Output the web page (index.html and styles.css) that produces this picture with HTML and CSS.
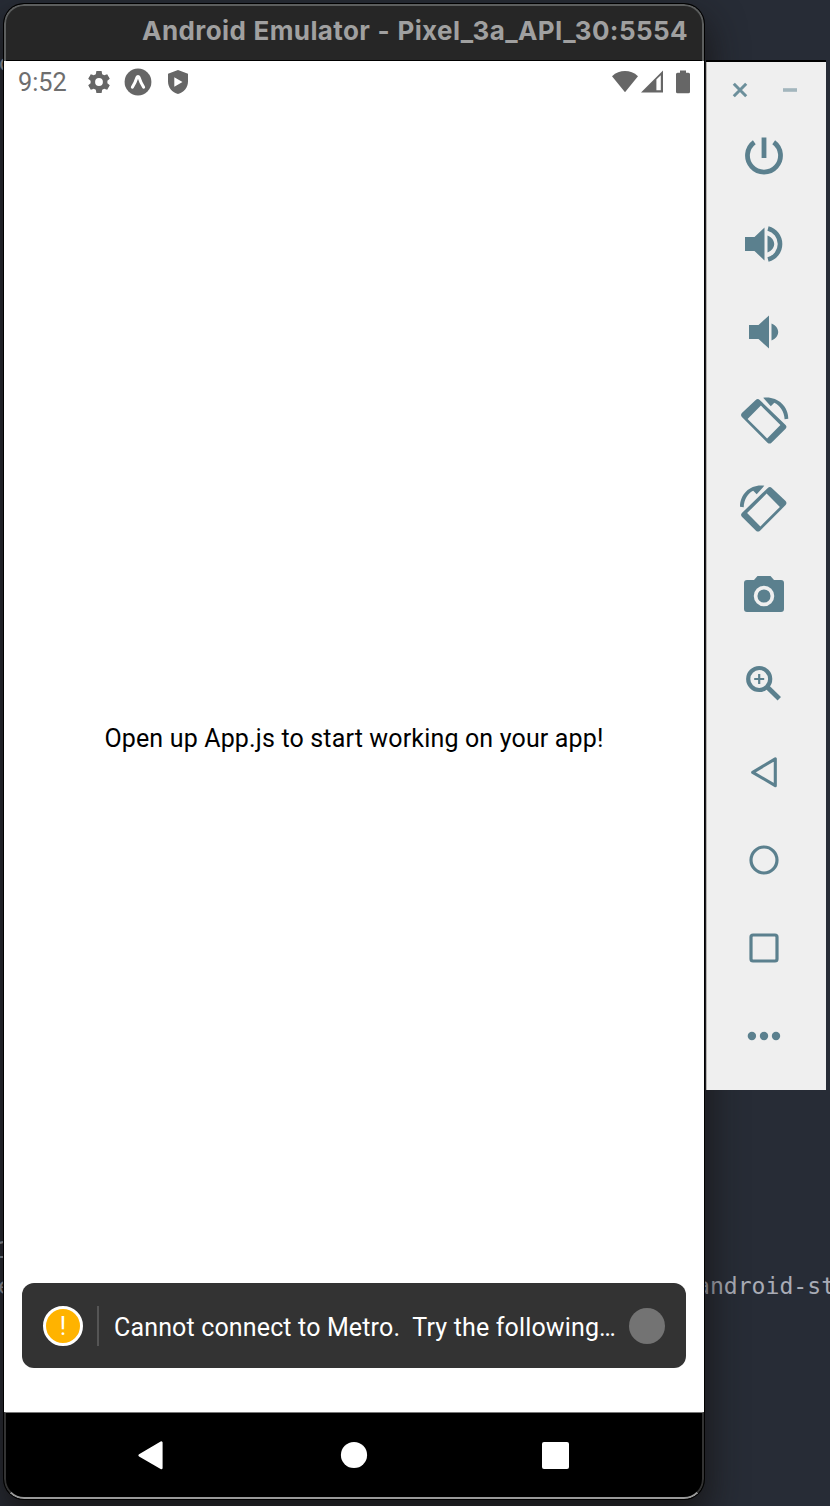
FILE: index.html
```html
<!DOCTYPE html>
<html lang="en">
<head>
<meta charset="utf-8">
<title>Android Emulator</title>
<link rel="stylesheet" href="styles.css">
</head>
<body>
<main class="desktop">
  <span class="code code-a">c</span>
  <span class="code code-b">1</span>
  <span class="code code-c">e</span>
  <span class="code code-d">android-st</span>

  <section class="emulator">
    <header class="titlebar"><span class="title">Android Emulator - Pixel_3a_API_30:5554</span></header>
    <div class="screen">
      <div class="status">
        <span class="time">9:52</span>
        <svg class="gear" width="24" height="24" viewBox="0 0 24 24"><path fill-rule="evenodd" d="M9.4 1h5.2l.6 3.2 2 1.1 3-1.1 2.6 4.5-2.4 2.1v2.4l2.4 2.1-2.6 4.5-3-1.1-2 1.1-.6 3.2H9.4l-.6-3.2-2-1.1-3 1.1-2.6-4.5 2.4-2.1v-2.4L1.200 8.700l2.600-4.500 3 1.100 2-1.100zM12 8.100a3.900 3.900 0 1 0 0 7.800 3.900 3.900 0 0 0 0-7.800z"/></svg>
        <svg class="expo" width="28" height="28" viewBox="0 0 28 28"><circle cx="14" cy="14" r="13.400"/><path class="caret" d="M8.400 19.200C10.700 15.800 12 12.500 13 9.300c.4-1 1.600-1 2 0 1 3.200 2.300 6.500 4.600 9.900"/></svg>
        <svg class="shield" width="22" height="26" viewBox="0 0 22 26"><path fill-rule="evenodd" d="M11 1 21 4.800v7.700c0 6-4.200 11-10 12.500C5.200 23.500 1 18.500 1 12.500V4.800zM7.300 8.300v9.400l8.200-4.700z"/></svg>
        <span class="spacer"></span>
        <svg class="wifi" width="28" height="24" viewBox="0 0 28 24"><path d="M1 6.200C8.500-.6 19.500-.6 27 6.200L14 22.200z"/></svg>
        <svg class="signal" width="24" height="24" viewBox="0 0 24 24"><path fill-rule="evenodd" d="M1 22.500 23 .5v22zM16.400 9.500v10.800h4.400V5.200z"/></svg>
        <svg class="battery" width="14" height="24" viewBox="0 0 14 24"><path d="M4 .5h6v2.300h2.500A1.500 1.500 0 0 1 14 4.300v17.500a1.500 1.500 0 0 1-1.500 1.500h-11A1.500 1.500 0 0 1 0 21.800V4.300a1.500 1.500 0 0 1 1.500-1.500H4z"/></svg>
      </div>
      <div class="app"><p class="hello">Open up App.js to start working on your app!</p></div>
      <div class="toast">
        <span class="warn">!</span>
        <span class="rule"></span>
        <span class="message">Cannot connect to Metro.&nbsp; Try the following…</span>
        <span class="dismiss"></span>
      </div>
    </div>
    <nav class="navbar">
      <svg width="30" height="32" viewBox="0 0 30 32"><path d="M2.700 15.300 24.300 2.700v25.200z" stroke="#fff" stroke-width="2.600" stroke-linejoin="round"/></svg>
      <svg width="30" height="32" viewBox="0 0 30 32"><circle cx="15" cy="15" r="13.100"/></svg>
      <svg width="30" height="32" viewBox="0 0 30 32"><rect x="1" y="2" width="27" height="27" rx="2"/></svg>
    </nav>
  </section>

  <aside class="tools">
    <div class="controls">
      <svg width="16" height="16" viewBox="0 0 16 16"><path d="m1.800 1.800 12.400 12.400M14.200 1.800 1.800 14.200" stroke="#6c8f9b" stroke-width="3"/></svg>
      <svg width="16" height="16" viewBox="0 0 16 16"><path d="M1 8h14" stroke="#a3b6bd" stroke-width="3.600"/></svg>
    </div>
    <svg class="tool line" viewBox="0 0 56 56"><path stroke-width="4.800" d="M18.300 14.200a16.500 16.500 0 1 0 19.400 0M28 9.500v20.500"/></svg>
    <svg class="tool solid" viewBox="0 0 56 56"><path d="M9 21v14h9.500l10 9.500V11.500L18.500 21zM31.500 19.500c4.200 1.800 6.700 4.900 6.700 8.500s-2.500 6.700-6.700 8.500z"/><path fill="none" stroke="#5b808e" stroke-width="4.600" d="M32 12.500a16 16 0 0 1 0 31"/></svg>
    <svg class="tool solid" viewBox="0 0 56 56"><path d="M13 21v14h9.500L33 44.500v-33L22.500 21zM35.500 19.500c4.200 1.800 6.700 4.900 6.700 8.500s-2.500 6.700-6.700 8.500z"/></svg>
    <svg class="tool solid" viewBox="0 0 56 56"><path fill-rule="evenodd" d="M19.700 7.900q2-1.800 4 0L49.600 33q1.700 1.800 0 3.800L35.500 50.700q-2 1.700-4 0L5.900 25.100q-1.700-2 0-4zM24.900 13.600 11.600 26.900 31.100 46.400 44.400 33.100z"/><path d="M27.200 5.800C40 3.800 52.300 13 52.300 26.800l-3.700.5C48.400 19.500 43.500 13.200 38.300 10.700l-3.500 3.500z"/></svg>
    <svg class="tool solid" viewBox="0 0 56 56"><g transform="matrix(-1 0 0 1 55.500 0)"><path fill-rule="evenodd" d="M19.700 7.900q2-1.800 4 0L49.600 33q1.700 1.800 0 3.800L35.500 50.700q-2 1.700-4 0L5.900 25.100q-1.700-2 0-4zM24.900 13.600 11.600 26.900 31.100 46.400 44.400 33.100z"/><path d="M27.200 5.800C40 3.800 51.500 13 51.500 26.800l-3.700.5C47.600 19.500 43.500 13.200 38.300 10.700l-3.500 3.500z"/></g></svg>
    <svg class="tool solid" viewBox="0 0 56 56"><path d="M11 12h7l3.500-4h13l3.500 4h7a3 3 0 0 1 3 3v26a3 3 0 0 1-3 3H11a3 3 0 0 1-3-3V15a3 3 0 0 1 3-3z"/><circle cx="28" cy="28" r="8.400" fill="none" stroke="#efefef" stroke-width="3.700"/></svg>
    <svg class="tool line" viewBox="0 0 56 56"><circle cx="23.200" cy="23" r="11" stroke-width="4.200"/><path stroke-width="2.200" d="M18.200 23h10M23.200 18v10"/><path stroke-width="4.800" d="m31.500 31.300 11.800 11.500"/></svg>
    <svg class="tool line" viewBox="0 0 56 56"><path stroke-width="3.100" stroke-linejoin="round" d="M16.700 28.300 39.300 14.900v26.800z"/></svg>
    <svg class="tool line" viewBox="0 0 56 56"><circle cx="28" cy="28" r="13" stroke-width="3.200"/></svg>
    <svg class="tool line" viewBox="0 0 56 56"><rect x="15" y="15" width="26" height="26" rx="2" stroke-width="3.200"/></svg>
    <svg class="tool solid" viewBox="0 0 56 56"><circle cx="15.900" cy="28" r="4.200"/><circle cx="28" cy="28" r="4.200"/><circle cx="40" cy="28" r="4.200"/></svg>
  </aside>
</main>
</body>
</html>
```
FILE: styles.css
```css
* { box-sizing: border-box; }
body { margin: 0; }
svg { display: block; flex: none; }

.desktop {
  position: relative;
  width: 830px;
  height: 1506px;
  overflow: hidden;
  background: #272c36;
}

.code {
  position: absolute;
  font: 23.1px/30px "DejaVu Sans Mono", monospace;
  color: #a9acb6;
  white-space: pre;
}
.code-a { left: -2px; top: 48px; }
.code-b { left: -3px; top: 1235px; }
.code-c { left: -2px; top: 1271px; }
.code-d { left: 696px; top: 1271px; }

/* Emulator window */
.emulator {
  position: absolute;
  left: 4px;
  top: 4px;
  width: 700px;
  height: 1495px;
  display: flex;
  flex-direction: column;
  border-radius: 20px;
  overflow: hidden;
  background: #000;
  box-shadow: 0 0 0 1px #000, 0 18px 36px 4px rgba(20, 18, 16, 0.75);
}
.titlebar {
  flex: none;
  height: 57px;
  display: flex;
  justify-content: flex-end;
  align-items: center;
  padding: 0 14px 5px 0;
  border: 2px solid #5c5e5e;
  border-width: 2px 2px 0;
  border-radius: 20px 20px 0 0;
  background: #262626;
  box-shadow: inset 0 -1px #000;
}
.title {
  font: 700 26px/30px Inter, sans-serif;
  letter-spacing: 0.4px;
  word-spacing: 0.7px;
  color: #a0a0a0;
  white-space: nowrap;
}
.screen {
  flex: none;
  height: 1351px;
  display: flex;
  flex-direction: column;
  background: #fff;
}
.status {
  height: 42px;
  display: flex;
  align-items: center;
  padding: 0 14px;
  fill: #666;
}
.time {
  width: 69px;
  padding-top: 1px;
  font: 25.3px/30px Roboto, sans-serif;
  color: #6e6e6e;
}
.expo { margin-left: 13px; }
.caret { fill: none; stroke: #fff; stroke-width: 3; stroke-linecap: round; }
.shield { margin-left: 15px; }
.spacer { flex: 1; }
.signal { margin-left: 1px; }
.battery { margin-left: 12px; }
.app {
  flex: 1;
  display: flex;
  justify-content: center;
  padding-top: 621px;
}
.hello {
  margin: 0;
  font: 25px/30px Roboto, sans-serif;
  letter-spacing: 0.16px;
  color: #000;
  white-space: nowrap;
}
.toast {
  height: 85px;
  margin: 0 18px 44px;
  padding: 0 21px;
  display: flex;
  align-items: center;
  border-radius: 12px;
  background: #333;
}
.warn {
  width: 40px;
  height: 40px;
  border: 3.5px solid #fff;
  border-radius: 50%;
  background: #ffb300;
  color: #fff;
  font: 25px/35px Roboto, sans-serif;
  text-align: center;
}
.rule {
  width: 2px;
  height: 40px;
  margin: 0 15px 0 14px;
  background: #555;
}
.message {
  flex: 1;
  padding-top: 5px;
  font: 25px/30px Roboto, sans-serif;
  letter-spacing: 0.15px;
  color: #fff;
  white-space: nowrap;
}
.dismiss {
  width: 36px;
  height: 36px;
  border-radius: 50%;
  background: #737373;
}
.navbar {
  flex: 1;
  display: grid;
  grid-template-columns: repeat(3, 202px);
  justify-content: center;
  justify-items: center;
  padding-top: 27px;
  border: 2px solid #333;
  border-top: 1px solid #777;
  border-bottom-color: #999;
  border-radius: 0 0 20px 20px;
  fill: #fff;
}

/* Side toolbar */
.tools {
  position: absolute;
  left: 706px;
  top: 62px;
  width: 120px;
  height: 1028px;
  border-left: 1px solid #b5b3b0;
  background: #efefef;
  box-shadow: 0 -2px #000;
}
.controls {
  height: 50px;
  display: flex;
  justify-content: space-between;
  padding: 20px 28px 0 25px;
}
.tool {
  width: 56px;
  height: 56px;
  margin: 16px 0 32px 29px;
}
.line { fill: none; stroke: #5b808e; }
.solid { fill: #5b808e; }
```
